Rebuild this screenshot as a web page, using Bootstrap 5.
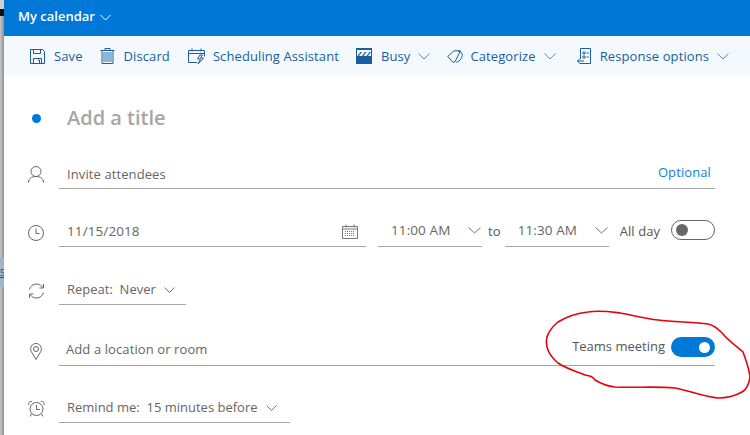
<!DOCTYPE html>
<html lang="en">
<head>
<meta charset="utf-8">
<title>My calendar</title>
<link href="https://cdn.jsdelivr.net/npm/bootstrap@5.3.0/dist/css/bootstrap.min.css" rel="stylesheet">
<style>
html,body{width:750px;height:435px;overflow:hidden;background:#fff;}
body{font-family:"Open Sans","Noto Sans",sans-serif;font-size:13px;letter-spacing:.1px;color:#555;position:relative;}
.edge{width:4px;flex:none;background:linear-gradient(90deg,#c9c9c9,#8f8f8f);display:flex;flex-direction:column;}
.edge-a{height:9px;background:#cfcfcf}.edge-b{height:7px;background:#111}.edge-c{height:242px;}
.edge-d{height:29px;background:#9fb6c8;color:#0a5a9c;font-size:9px;line-height:29px;overflow:hidden;text-decoration:underline}
.pane{flex:1;min-width:0;}
.topbar{height:36px;background:#0078d7;color:#fff;font-weight:600;font-size:13px;letter-spacing:0;padding-left:14px;padding-bottom:2px;}
.topbar svg{margin-left:5px;}
.tools{height:40px;background:#f4f9fd;color:#1a5e9f;padding-left:26px;padding-top:2px;font-size:13px;}
.tools svg{flex:none;margin-bottom:2px;}
.tool-chev{margin-left:8px;}
.t1{margin-right:17px}.t2{margin-right:18px}.t3{margin-right:17px}.t4{margin-right:17px}.t5{margin-right:21px}
.ic{margin-right:9px}
.ic-s{margin-right:7px}
.ic-c{margin-right:7px}
.ic-r{margin-right:8px}
.title-row{height:36px;margin-top:24px;}
.dot{width:9px;height:9px;border-radius:50%;background:#0078d7;margin-left:28px;margin-right:26px;flex:none;}
.title-text{font-size:20px;font-weight:600;letter-spacing:0;color:#a6a6a6;}
.form-line{height:29px;padding-right:35px;}
.glyph{width:20px;margin-left:22px;margin-right:13px;flex:none;display:flex;justify-content:center;}
.field{border-bottom:1px solid #a6a6a6;height:29px;padding:0 8px;color:#666;white-space:nowrap;}
.grow-f{flex:1;min-width:0;}
.r2{margin-top:24px}.r3{margin-top:29px}.r4{margin-top:29px}.r5{margin-top:32px}.r6{margin-top:28px}
.f-invite{padding-right:4px;}
.f-invite .txt{padding-top:2px;}
.opt{color:#0f80d9;padding-bottom:2px;}
.big{font-size:13.500px;}
.w-date{width:307px;padding-bottom:2px;}
.w-time{width:104px;padding-left:13px;padding-right:1px;padding-bottom:3px;}
.w-first{margin-left:12px;}
.sep{margin:0 4px 0 6px;padding-bottom:2px;}
.sw{width:44px;height:20px;border-radius:10px;flex:none;display:flex;align-items:center;padding:0 4px;}
.sw-off{border:1px solid #666;background:#fff;margin-bottom:6px;}
.sw-off i{width:12px;height:12px;border-radius:50%;background:#666;display:block;}
.sw-on{background:#0078d7;justify-content:flex-end;}
.sw-on i{width:11px;height:11px;border-radius:50%;background:#fff;display:block;margin-right:1px;}
.allday{margin:0 auto 0 11px;padding-bottom:2px;white-space:nowrap;}
.w-rep{width:127px;letter-spacing:0;}.w-rem{width:231px;letter-spacing:0;}
.f-loc{padding-left:7px;padding-right:0;}
.f-loc .txt{padding-bottom:3px;}
.teams-wrap{padding-bottom:8px;}
.teams{margin-right:6px;color:#555;font-size:13px;letter-spacing:0;}
.scribble{position:absolute;left:0;top:0;pointer-events:none;}
</style>
</head>
<body>
<div class="d-flex h-100">
  <div class="edge">
    <div class="edge-a"></div><div class="edge-b"></div><div class="edge-c"></div><div class="edge-d">5</div>
  </div>
  <div class="pane">
    <div class="topbar d-flex align-items-center">My calendar
      <svg width="11" height="7" viewBox="0 0 11 7" fill="none" stroke="#fff"><path d="M.5 1l5 5 5-5"/></svg>
    </div>
    <div class="tools d-flex align-items-center">
      <div class="d-flex align-items-center t1">
        <svg class="ic" width="15" height="15" viewBox="0 0 15 15" fill="none" stroke="#1a5e9f"><path d="M.5.5h12l2 2v12H.5z"/><path d="M3.500.5v4h7v-4M3.500 14.500v-5h8v5M8 11h1.500v3.500"/></svg>Save</div>
      <div class="d-flex align-items-center t2">
        <svg class="ic" width="15" height="16" viewBox="0 0 15 16" fill="none" stroke="#1a5e9f"><rect x="3" y="4" width="9" height="10" fill="#8db5d9" stroke="none"/><path d="M.5 2.500h14M5 2.500V.5h5v2M2 2.500v13h11v-13"/></svg>Discard</div>
      <div class="d-flex align-items-center t3">
        <svg class="ic-s" width="18" height="17" viewBox="0 0 18 17" fill="none" stroke="#1a5e9f"><path d="M9 14.500H.5v-12h16v6M.5 5.500h16M4 .5v3M13 .5v3"/><path d="M12 7l-2.500 4h3L10 16l5.500-6h-3l2-3z" fill="#f4f9fd"/></svg>Scheduling Assistant</div>
      <div class="d-flex align-items-center t4">
        <svg class="ic" width="16" height="16" viewBox="0 0 16 16"><rect width="16" height="16" fill="#1a5e9f"/><path d="M1 2h14v6H1z" fill="#f4f9fd"/><path d="M1.500 8l3-4h1.500l-3 4zM6 8l3-4h1.500l-3 4zM10.500 8l3-4H15l-3 4z" fill="#1a5e9f"/></svg>Busy
        <svg class="tool-chev" width="12" height="7" viewBox="0 0 12 7" fill="none" stroke="#5a8fc0"><path d="M.5.5L6 6l5.500-5.500"/></svg></div>
      <div class="d-flex align-items-center t5">
        <svg class="ic-c" width="16" height="13" viewBox="0 0 16 13" fill="none" stroke="#1a5e9f"><path d="M.7 6.500L7 .8h6.500L8 11.800 6 12.300z"/><path d="M11 1c2.500.3 4.500 2 4.300 4.500-.2 2.500-3 6.500-6 6.800"/></svg>Categorize
        <svg class="tool-chev" width="12" height="7" viewBox="0 0 12 7" fill="none" stroke="#5a8fc0"><path d="M.5.5L6 6l5.500-5.500"/></svg></div>
      <div class="d-flex align-items-center">
        <svg class="ic-r" width="15" height="16" viewBox="0 0 15 16" fill="none" stroke="#1a5e9f"><path d="M3.500 11V.5h10v15h-11"/><path d="M6 4h2v2H6zM6 8h2v2H6zM9.500 5H12M9.500 9H12" stroke-width=".9"/><path d="M7 13H.5M2.500 11l-2 2 2 2"/></svg>Response options
        <svg class="tool-chev" width="12" height="7" viewBox="0 0 12 7" fill="none" stroke="#5a8fc0"><path d="M.5.5L6 6l5.500-5.500"/></svg></div>
    </div>

    <div class="title-row d-flex align-items-center"><span class="dot"></span><span class="title-text">Add a title</span></div>

    <div class="form-line r2 d-flex align-items-center">
      <div class="glyph"><svg width="16" height="17" viewBox="0 0 16 17" fill="none" stroke="#666"><circle cx="8" cy="5.500" r="5"/><path d="M.5 16.500c0-4 3-6 7.500-6s7.500 2 7.500 6"/></svg></div>
      <div class="field f-invite grow-f d-flex align-items-center justify-content-between"><span class="txt">Invite attendees</span><span class="opt">Optional</span></div>
    </div>

    <div class="form-line r3 d-flex align-items-center">
      <div class="glyph"><svg width="16" height="16" viewBox="0 0 16 16" fill="none" stroke="#666"><circle cx="8" cy="8" r="7.500"/><path d="M8 3.500V8.500h3.500"/></svg></div>
      <div class="field w-date big d-flex align-items-center justify-content-between"><span>11/15/2018</span>
        <svg width="16" height="15" viewBox="0 0 16 15" fill="none" stroke="#777"><path d="M.5 2.500h15v12H.5zM.5 5h15M4 .5v3M12 .5v3"/><path d="M3 7.500h10M3 9.500h10M3 11.500h10" stroke-dasharray="1 1"/></svg></div>
      <div class="field w-time w-first big d-flex align-items-center justify-content-between"><span>11:00 AM</span>
        <svg width="13" height="7" viewBox="0 0 13 7" fill="none" stroke="#777"><path d="M.5.500L6.500 6l6-5.500"/></svg></div>
      <span class="sep">to</span>
      <div class="field w-time big d-flex align-items-center justify-content-between"><span>11:30 AM</span>
        <svg width="13" height="7" viewBox="0 0 13 7" fill="none" stroke="#777"><path d="M.5.500L6.500 6l6-5.500"/></svg></div>
      <span class="allday">All day</span>
      <span class="sw sw-off"><i></i></span>
    </div>

    <div class="form-line r4 d-flex align-items-center">
      <div class="glyph"><svg width="17" height="16" viewBox="0 0 17 16" fill="none" stroke="#666"><path d="M1.500 6.500C2.500 3 5 1 8.500 1c3 0 5 1.500 6.500 3.500M15.500 1v4h-4M15.500 9.500c-1 3.500-3.500 5.500-7 5.500-3 0-5-1.500-6.500-3.500M1.500 15v-4h4"/></svg></div>
      <div class="field w-rep d-flex align-items-center gap-2"><span>Repeat:&nbsp; Never</span>
        <svg width="11" height="6" viewBox="0 0 11 6" fill="none" stroke="#777"><path d="M.5.500l5 5 5-5"/></svg></div>
    </div>

    <div class="form-line r5 d-flex align-items-center">
      <div class="glyph"><svg width="12" height="17" viewBox="0 0 12 17" fill="none" stroke="#666"><path d="M6 16.500L1.200 8.500C-.5 4.500 2 .5 6 .5s6.500 4 4.800 8z"/><circle cx="6" cy="6" r="2.500"/></svg></div>
      <div class="field f-loc grow-f d-flex align-items-center justify-content-between"><span class="txt">Add a location or room</span>
        <span class="teams-wrap d-flex align-items-center"><span class="teams">Teams meeting</span><span class="sw sw-on"><i></i></span></span></div>
    </div>

    <div class="form-line r6 d-flex align-items-center">
      <div class="glyph"><svg width="17" height="17" viewBox="0 0 17 17" fill="none" stroke="#666"><circle cx="8.500" cy="9" r="6.500"/><path d="M8.500 5v4.500H12M1 5c-1-2 .5-4 3-3.500M16 5c1-2-.5-4-3-3.500M3.500 14l-1.500 2.500M13.500 14l1.500 2.500"/></svg></div>
      <div class="field w-rem d-flex align-items-center gap-2"><span>Remind me:&nbsp; 15 minutes before</span>
        <svg width="11" height="6" viewBox="0 0 11 6" fill="none" stroke="#777"><path d="M.5.500l5 5 5-5"/></svg></div>
    </div>
  </div>
</div>
<svg class="scribble" width="750" height="435" viewBox="0 0 750 435" fill="none" stroke="#e8000b" stroke-width="1.600"><path d="M588 312C600 310 612 312 620 313C632 315 645 319 658 320C675 322 695 322 708 324C716 326 718 329 722 333C728 340 737 347 743 352C746 360 749 368 750 377C749 384 747 389 742 392C735 396 727 398 718 398C705 397 690 391 675 388C655 386 635 388 615 387C606 386 600 383 595 380C592 376 590 376 585 375C575 371 565 368 558 363C552 358 550 355 548 350C546 345 546 341 547 337C549 331 553 326 558 322C568 316 578 313 588 312Z"/></svg>
</body>
</html>
